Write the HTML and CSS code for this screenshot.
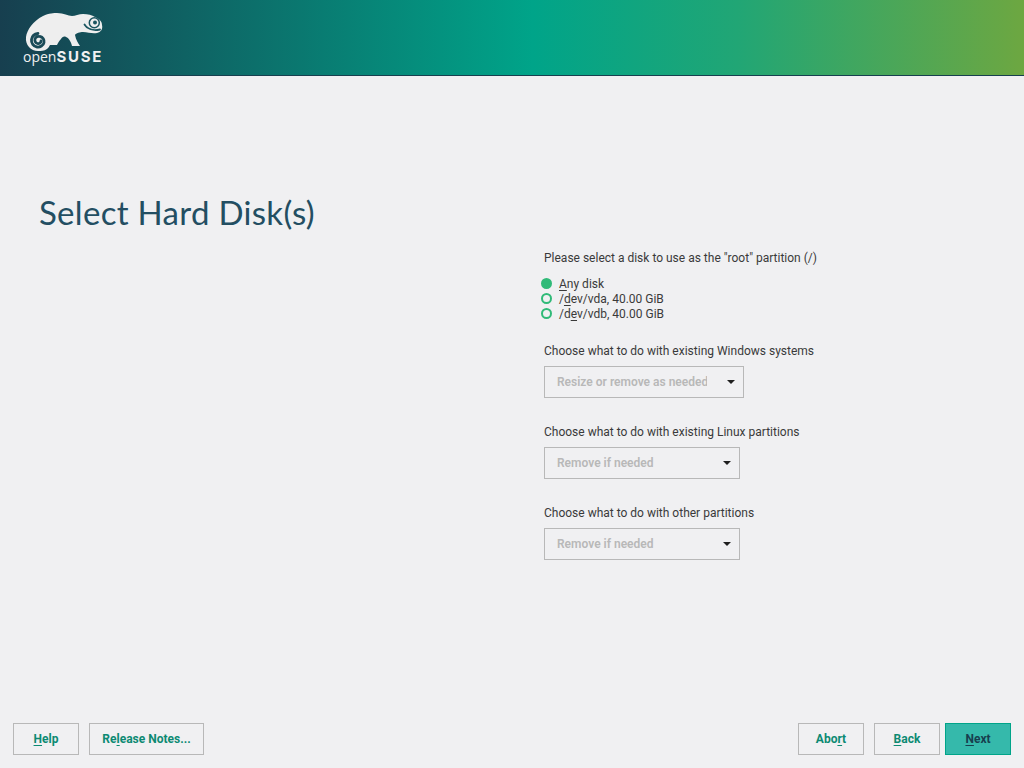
FILE: index.html
```html
<!DOCTYPE html>
<html lang="en">
<head>
<meta charset="utf-8">
<title>Select Hard Disk(s)</title>
<link rel="stylesheet" href="styles.css">
</head>
<body>
<div class="page">
  <header class="banner">
    <div class="logo">
      <svg class="logo-mark" width="82" height="44" viewBox="0 0 82 44" aria-hidden="true">
        <path class="logo-body" d="M3 26C4 19 10 10 20 5C26 2 31 2 34 2C41 2 45 5 49 5C52 5 56 3 60 3C65 3 69 4 72 6C76 8 79 10 79 14C80 18 78 21 74 22C69 23 65 21 60 21C57 21 53 22 52 24C53 29 55 32 57 35L49 35C48 31 46 27 43 26C41 25 39 26 38 28C36 30 35 32 34 34L27 34C26 36 25 37 24 38C21 40 18 40 15 40C8 40 2 34 3 26Z"/>
        <path class="logo-spiral" d="M18 30C18 32 16 33 14.500 32.500C12.500 32 11.500 30 12 28C12.500 26 15 25 17 25.500C20 26 21.500 29 21 31.500C20.500 34.500 17 36.500 14 36C10.500 35.500 8 32 8.500 28.500C9 25.500 11.500 23 15 22.500"/>
        <circle class="logo-eye-ring" cx="71.300" cy="11.700" r="5"/>
        <circle class="logo-pupil" cx="72" cy="11.500" r="2"/>
        <path class="logo-mouth" d="M61.500 13.500C64 18 70 20 77 18.500"/>
      </svg>
      <div class="logo-text"><span class="logo-open">open</span><span class="logo-suse">SUSE</span></div>
    </div>
  </header>
  <main class="content">
    <h1 class="title">Select Hard Disk(s)</h1>
    <form class="form">
      <p class="label">Please select a disk to use as the "root" partition (/)</p>
      <div class="radios">
        <div class="radio"><span class="dot dot-on"></span><span><u>A</u>ny disk</span></div>
        <div class="radio"><span class="dot"></span><span>/<u>d</u>ev/vda, 40.00 GiB</span></div>
        <div class="radio"><span class="dot"></span><span>/d<u>e</u>v/vdb, 40.00 GiB</span></div>
      </div>
      <p class="label label-select">Choose what to do with existing Windows systems</p>
      <div class="select select-wide"><span class="select-text">Resize or remove as needed</span><span class="caret"></span></div>
      <p class="label label-select">Choose what to do with existing Linux partitions</p>
      <div class="select"><span class="select-text">Remove if needed</span><span class="caret"></span></div>
      <p class="label label-select">Choose what to do with other partitions</p>
      <div class="select"><span class="select-text">Remove if needed</span><span class="caret"></span></div>
    </form>
  </main>
  <footer class="footer">
    <div class="btn-group">
      <button class="btn btn-help" type="button"><u>H</u>elp</button>
      <button class="btn btn-notes" type="button">Re<u>l</u>ease Notes...</button>
    </div>
    <div class="btn-group">
      <button class="btn btn-nav btn-abort" type="button">Abo<u>r</u>t</button>
      <button class="btn btn-nav btn-back" type="button"><u>B</u>ack</button>
      <button class="btn btn-nav btn-next" type="button"><u>N</u>ext</button>
    </div>
  </footer>
</div>
</body>
</html>
```
FILE: styles.css
```css
* { box-sizing: border-box; }
html, body { margin: 0; padding: 0; height: 100%; overflow: hidden; }
body { background: #f0f0f2; color: #3a3a3a; font-family: Roboto, "Liberation Sans", sans-serif; font-size: 12px; }
u { text-decoration: underline; text-decoration-thickness: 1px; text-underline-offset: 2px; }
.page { display: flex; flex-direction: column; height: 768px; }
.banner { flex: 0 0 76px; height: 76px; border-bottom: 1px solid #173f4f; background: linear-gradient(90deg, #173f4f 0%, #00a489 52%, #21a675 72%, #6da741 100%); padding: 11px 0 0 23px; }
.logo { width: 82px; color: #f0f0f0; }
.logo-mark { display: block; }
.logo-body { fill: #eeeeee; }
.logo-spiral { fill: none; stroke: #1a4a57; stroke-width: 2.800; stroke-linecap: round; }
.logo-eye-ring { fill: #eeeeee; stroke: #1b5560; stroke-width: 1.500; }
.logo-pupil { fill: #1b5560; }
.logo-mouth { fill: none; stroke: #1b5560; stroke-width: 1.800; stroke-linecap: round; }
.logo-text { display: flex; align-items: baseline; margin-top: -5px; line-height: 14px; white-space: nowrap; }
.logo-open { font-family: "Open Sans", sans-serif; font-size: 14px; font-weight: 400; }
.logo-suse { font-family: Inter, sans-serif; font-size: 15px; font-weight: 700; letter-spacing: 1.700px; }
.content { flex: 1; display: grid; grid-template-columns: 544px 1fr; }
.title { margin: 0; padding: 116px 0 0 39px; font-family: Lato, sans-serif; font-size: 33px; font-weight: 400; letter-spacing: 0.300px; line-height: 40px; color: #234e62; }
.form { padding-top: 175px; }
.label { margin: 0; line-height: 15px; color: #3a3a3a; }
.radios { margin: 11px 0 0 -3px; }
.radio { display: flex; align-items: flex-start; height: 15px; gap: 7px; line-height: 15px; }
.dot { width: 11px; height: 11px; margin-top: 1px; border-radius: 50%; border: 2px solid #30ba78; }
.dot-on { background: #30ba78; }
.label-select { margin-top: 22px; }
.select { display: flex; align-items: center; justify-content: space-between; width: 196px; height: 32px; margin-top: 7px; margin-bottom: 27px; padding: 0 8px 0 12px; border: 1px solid #b8b8b8; font-weight: 600; color: #b8b8b8; }
.select-wide { width: 200px; }
.select-text { overflow: hidden; white-space: nowrap; width: 150px; }
.caret { width: 0; height: 0; border-left: 4px solid transparent; border-right: 4px solid transparent; border-top: 4px solid #1f1f1f; }
.footer { flex: 0 0 45px; display: flex; justify-content: space-between; align-items: flex-start; padding: 0 13px; }
.btn-group { display: flex; }
.btn { height: 32px; padding: 0; background: transparent; border: 1px solid #b8b8b8; border-radius: 0; font-family: Roboto, sans-serif; font-size: 12px; font-weight: 700; color: #0c8a72; }
.btn-help { width: 66px; margin-right: 10px; }
.btn-notes { width: 115px; }
.btn-nav { width: 66px; }
.btn-abort { margin-right: 10px; }
.btn-back { margin-right: 5px; }
.btn-next { background: #35b9ab; border-color: #00a489; color: #173f4f; }
```
